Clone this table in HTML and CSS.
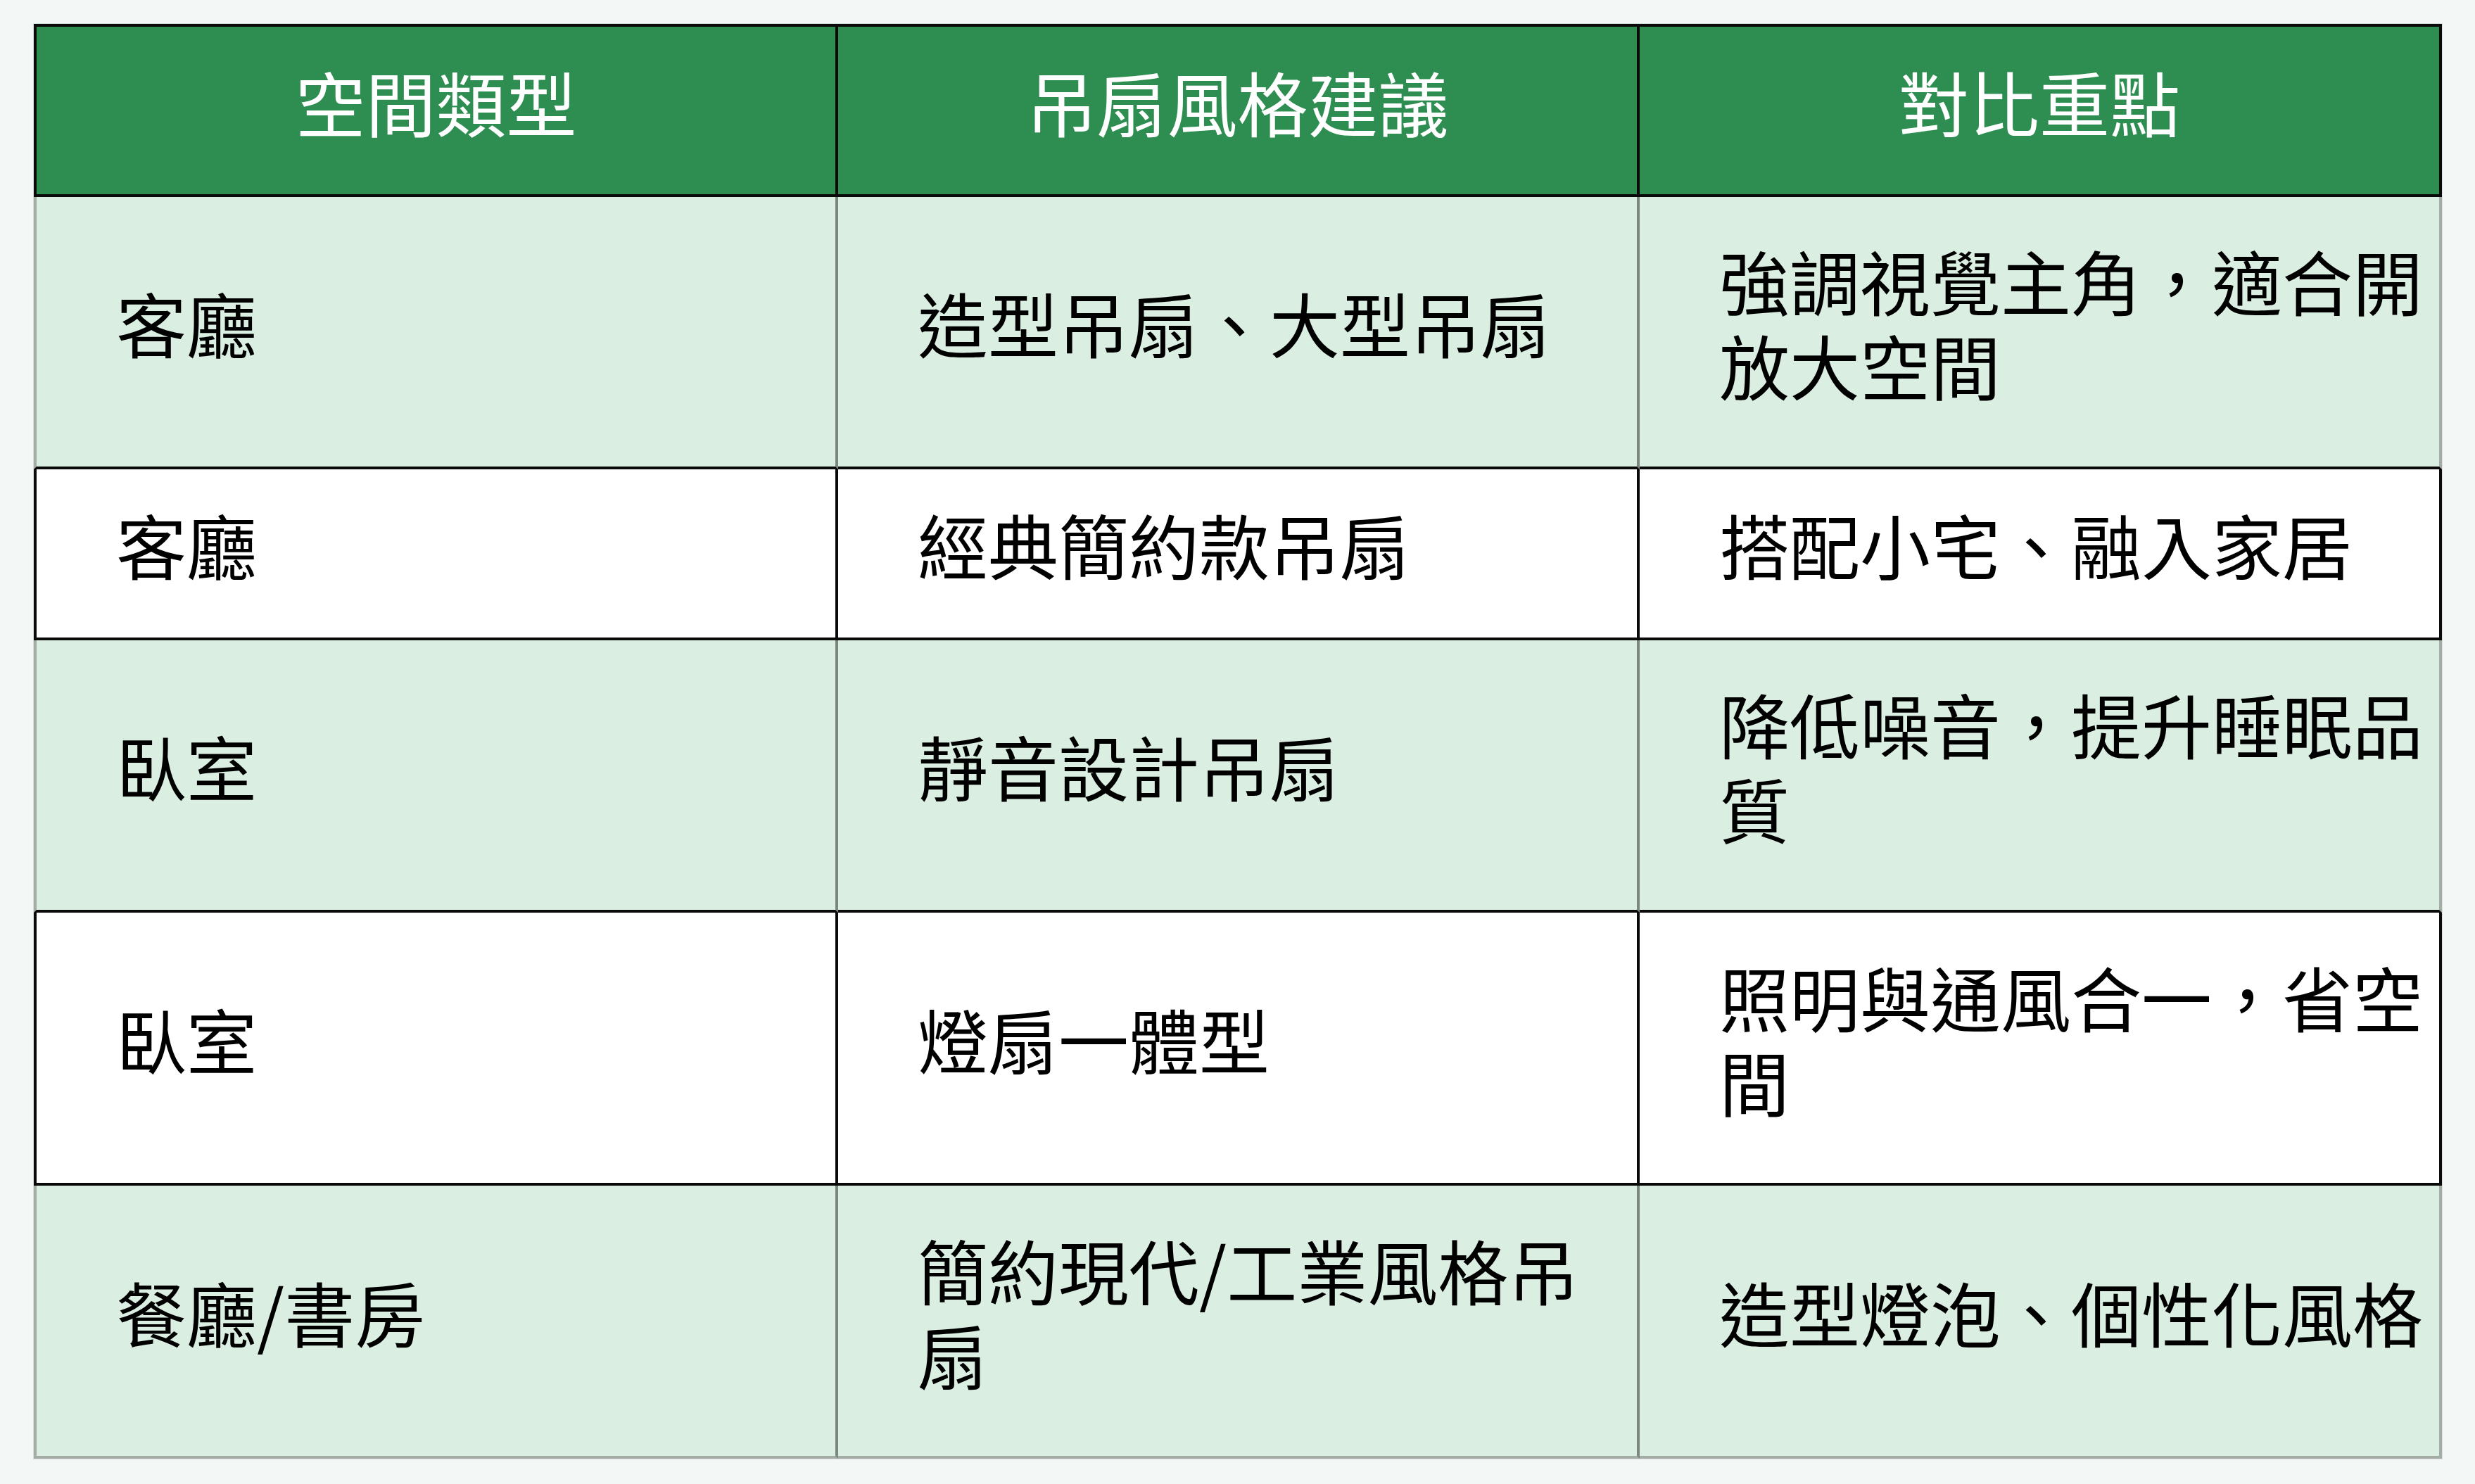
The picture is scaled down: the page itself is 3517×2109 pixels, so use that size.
FILE: index.html
```html
<!DOCTYPE html>
<html lang="zh-Hant">
<head>
<meta charset="utf-8">
<title>吊扇風格建議</title>
<link rel="stylesheet" href="styles.css">
</head>
<body>
<main class="page">
  <table class="compare">
    <thead>
      <tr class="row-head">
        <th class="c1">空間類型</th>
        <th class="c2">吊扇風格建議</th>
        <th class="c3">對比重點</th>
      </tr>
    </thead>
    <tbody>
      <tr class="row-green tall">
        <td class="c1">客廳</td>
        <td class="c2">造型吊扇、大型吊扇</td>
        <td class="c3">強調視覺主角，適合開放大空間</td>
      </tr>
      <tr class="row-white short">
        <td class="c1">客廳</td>
        <td class="c2">經典簡約款吊扇</td>
        <td class="c3">搭配小宅、融入家居</td>
      </tr>
      <tr class="row-green tall">
        <td class="c1">臥室</td>
        <td class="c2">靜音設計吊扇</td>
        <td class="c3">降低噪音，提升睡眠品質</td>
      </tr>
      <tr class="row-white tall2">
        <td class="c1">臥室</td>
        <td class="c2">燈扇一體型</td>
        <td class="c3">照明與通風合一，省空間</td>
      </tr>
      <tr class="row-green tall2 last">
        <td class="c1">餐廳/書房</td>
        <td class="c2">簡約現代/工業風格吊扇</td>
        <td class="c3">造型燈泡、個性化風格</td>
      </tr>
    </tbody>
  </table>
</main>
</body>
</html>
```

FILE: styles.css
```css
html, body {
  margin: 0;
  padding: 0;
  background: #f3f7f6;
}

body {
  width: 3517px;
  height: 2109px;
  overflow: hidden;
  font-family: "Noto Sans CJK TC", "Noto Sans CJK SC", sans-serif;
  color: #000;
}

.page {
  padding: 34px 47px 0 48px;
}

.compare {
  width: 3422px;
  border-collapse: separate;
  border-spacing: 0;
  table-layout: fixed;
  outline: 1px solid #d9dfdb;
}

.compare th,
.compare td {
  box-sizing: border-box;
  font-size: 100px;
  line-height: 120px;
  font-weight: 400;
  vertical-align: middle;
  border-right: 4px solid #0a0a0a;
  border-bottom: 4px solid #0a0a0a;
  padding: 0 10px 27px 113px;
  text-align: left;
}

.compare .c1 { width: 1143px; border-left: 4px solid #0a0a0a; }
.compare .c2 { width: 1139px; }
.compare .c3 { width: 1140px; }

.row-head { height: 246px; }
.row-head th {
  background: #2e8e51;
  color: #ffffff;
  text-align: center;
  padding: 0 0 27px 0;
  border-top: 4px solid #0a0a0a;
}

.tall { height: 387px; }
.short { height: 243px; }
.tall2 { height: 388px; }

.row-white td { background: #ffffff; }

.row-green td {
  background: #dbeee2;
  border-right-color: #7b867e;
}
.row-green td.c1 { border-left-color: #a4aca6; }
.row-green td.c3 { border-right-color: #a4aca6; }
.row-green.last td { border-bottom-color: #a4aca6; }
```
